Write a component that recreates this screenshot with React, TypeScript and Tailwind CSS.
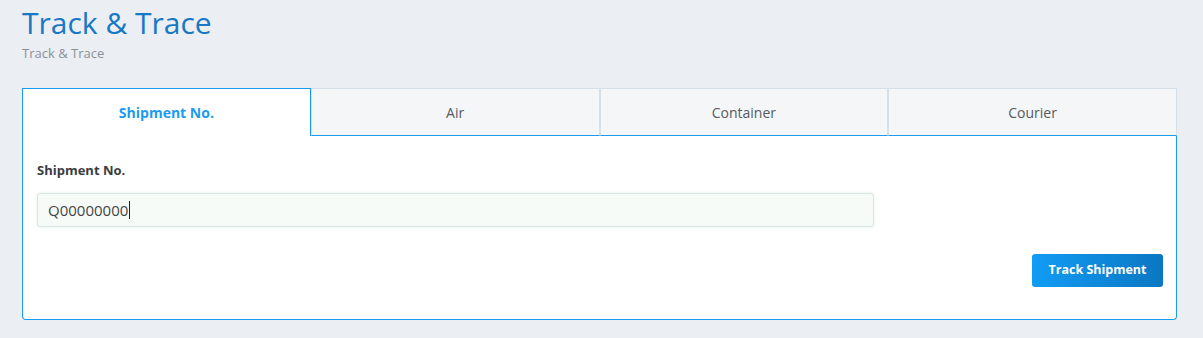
import React from "react";

export default function App() {
  const tabs = ["Shipment No.", "Air", "Container", "Courier"];
  return (
    <div
      className="min-h-[338px] bg-[#ebeef3] px-[22px] pt-[4px]"
      style={{ fontFamily: "'Open Sans', Lato, sans-serif" }}
    >
      <h1 className="text-[30px] leading-[38px] text-[#1878c4] font-normal">Track &amp; Trace</h1>
      <div className="text-[13px] leading-[16px] mt-[3px] text-[#8c9096]">Track &amp; Trace</div>
      <div className="mt-[27px] w-[1155px]">
        <div className="flex h-[48px]">
          {tabs.map((t, i) =>
            i === 0 ? (
              <div
                key={t}
                className="flex-1 flex items-center justify-center bg-white border-l border-t border-r border-[#1a9bf0] text-[14px] font-bold text-[#1a9bf0]"
              >
                {t}
              </div>
            ) : (
              <div
                key={t}
                className="flex-1 flex items-center justify-center bg-[#f5f6f8] border border-[#d6e0ea] border-b-[#1a9bf0] text-[14px] text-[#555a60]"
              >
                {t}
              </div>
            )
          )}
        </div>
        <div className="bg-white border-l border-r border-b border-[#1a9bf0] rounded-b-[4px] px-[14px] pt-[26px] pb-[32px]">
          <div className="text-[13px] font-bold text-[#3a3d42] leading-[16px]">Shipment No.</div>
          <div className="mt-[15px] w-[837px] h-[34px] rounded-[3px] border border-[#d8e6e4] bg-[#f7fbf8] shadow-[0_0_3px_rgba(180,220,200,0.4)] flex items-center px-[10px] text-[15px] text-[#444]">
            <span>Q00000000</span>
            <span className="inline-block w-px h-[18px] bg-[#222] ml-[1px]"></span>
          </div>
          <div className="flex justify-end mt-[27px]">
            <button className="w-[131px] h-[33px] rounded-[3px] bg-gradient-to-r from-[#129cf5] to-[#0b77c2] text-white text-[12.5px] font-bold mr-[-1px]">
              Track Shipment
            </button>
          </div>
        </div>
      </div>
    </div>
  );
}
